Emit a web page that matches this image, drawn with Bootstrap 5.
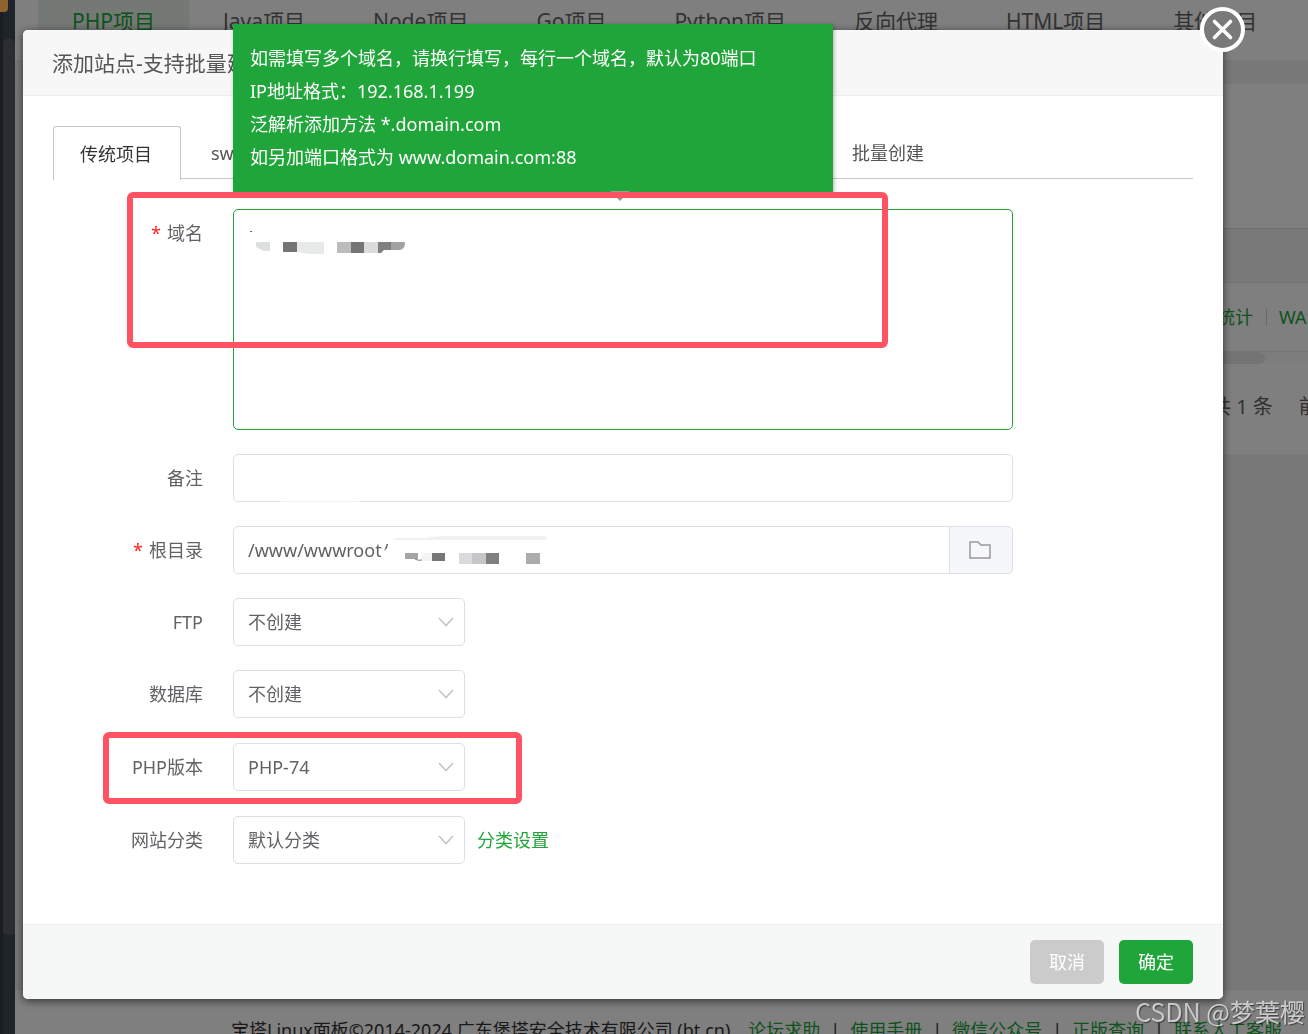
<!DOCTYPE html>
<html lang="zh-CN">
<head>
<meta charset="utf-8">
<meta name="viewport" content="width=device-width, initial-scale=1">
<title>添加站点</title>
<link href="https://cdn.jsdelivr.net/npm/bootstrap@5.3.0/dist/css/bootstrap.min.css" rel="stylesheet">
<style>
  :root { --bt-green: #20a53a; --bt-line: #dcdfe6; --bt-text: #606266; --bt-mark: #ff5262; }
  body { font-family: "Noto Sans", "Noto Sans CJK SC", sans-serif; font-size: 18px; line-height: 24px; color: var(--bt-text); background: #f1f1f1; overflow: hidden; }
  a { text-decoration: none; color: var(--bt-green); }

  /* page behind the dialog */
  .app-shell { height: 100vh; }
  .side-rail { width: 15px; z-index: 20; background: #1f232a; padding: 38px 0 0 3px; box-shadow: inset 3px 0 #1a1d21; }
  .side-thumb { height: 897px; background: #2a2e32; border-radius: 6px 6px 4px 4px; }
  .side-logo { width: 8px; height: 12px; top: 0; left: 0; background: #8f632c; border-radius: 0 0 4px 0; }
  .type-tabs { height: 60px; padding-left: 23px; font-size: 21px; background: #fff; }
  .type-tabs a { padding: 6px 34px 0; line-height: 30px; color: #666; }
  .type-tabs a.on { background: #ebf3ed; color: var(--bt-green); }
  .site-panel { margin: 24px 0 0 15px; background: #fff; }
  .panel-tools { height: 144px; }
  .panel-head { height: 55px; background: #f2f2f2; border-top: 1px solid #dcdcdc; border-bottom: 1px solid #e6e6e6; }
  .panel-row { height: 69px; border-bottom: 1px solid #ebebeb; }
  .row-tail { width: 91px; }
  .row-tail span { width: 1px; height: 18px; margin: 0 12px 0 13px; background: #d0d0d0; }
  .hscroll { height: 12px; background: #fafafa; }
  .hscroll div { width: 1235px; height: 12px; background: #e8e9e8; border-radius: 6px; }
  .panel-page { height: 90px; padding-bottom: 4px; font-size: 20px; }
  .page-tail { width: 97px; gap: 26px; }
  .app-foot { height: 44px; padding: 28px 0 0 216px; background: #fff; color: #333; gap: 10px; }
  .backdrop-dim { background: rgba(0,0,0,.5); z-index: 10; }

  /* dialog */
  .dialog-wrap { padding: 30px 85px 0 23px; z-index: 30; }
  .site-dialog { border-radius: 5px; background: #fff; box-shadow: 0 2px 8px rgba(0,0,0,.6); }
  .dialog-head { height: 66px; padding: 0 29px; background: #f7f7f7; border-bottom: 1px solid #eee; border-radius: 5px 5px 0 0; font-size: 21px; color: #555; }
  .dialog-close { top: -23px; right: -22px; width: 45px; height: 45px; }
  .dialog-body { padding: 30px 30px 60px; }
  .mode-tabs { height: 53px; border-bottom: 1px solid #c8c8cc; margin-bottom: 30px; }
  .mode-tabs button { border: 0; background: none; height: 53px; padding: 0 27px; color: #555; text-align: left; }
  .mode-tabs button.on { width: 128px; height: 54px; border: 1px solid #c4c6cc; border-bottom: 0; border-radius: 3px 3px 0 0; background: #fff; padding: 0 26px; color: #333; }
  .mode-tabs .mode-wide { width: 644px; padding-left: 30px; }

  .form-line { margin-bottom: 24px; }
  .form-line.pick { margin-bottom: 25px; }
  .line-label { width: 180px; padding-right: 30px; line-height: 48px; text-align: right; }
  .must::before { content: "*"; color: #f22; margin-right: 6px; }
  .line-field { width: 780px; }
  .site-dialog .form-control, .site-dialog .form-select { height: 48px; padding: 0 14px; font-size: 18px; line-height: 24px; color: var(--bt-text); border: 1px solid var(--bt-line); border-radius: 5px; background-color: #fff; }
  .site-dialog textarea.form-control { height: 221px; padding: 12px 14px; resize: none; border-color: var(--bt-green); }
  .site-dialog .input-group .form-control { border-radius: 5px 0 0 5px; }
  .site-dialog .input-group .folder-btn { width: 64px; padding: 0 2px 4px 0; border: 1px solid var(--bt-line); background: #f5f7fa; border-radius: 0 5px 5px 0; }
  .site-dialog .form-select { width: 232px; background-image: url("data:image/svg+xml,%3Csvg xmlns='http://www.w3.org/2000/svg' viewBox='0 0 16 10'%3E%3Cpath d='M1 1l7 7.500 7-7.500' fill='none' stroke='%23c0c4cc' stroke-width='1.600'/%3E%3C/svg%3E"); background-size: 16px 10px; background-position: right 10px center; }

  .field-tip { left: 180px; top: -185px; width: 600px; height: 170px; padding: 18px 17px; line-height: 33px; color: #fff; background: var(--bt-green); box-shadow: 1px 1px 4px rgba(0,0,0,.3); z-index: 2; }
  .tip-arrow { left: 558px; top: -18px; z-index: 4; }
  .red-frame { border: 6px solid var(--bt-mark); border-radius: 6px; z-index: 3; pointer-events: none; }
  .frame-domain { left: 74px; top: -17px; width: 761px; height: 156px; }
  .frame-php { left: 50px; top: -11px; width: 419px; height: 72px; }
  .mask-domain { left: 10px; top: 16px; }
  .mask-path { left: 149px; top: 4px; z-index: 6; }
  .mask-note { left: 48px; bottom: 0; width: 78px; height: 1px; background: #f4f4f6; }

  .dialog-foot { height: 75px; padding: 0 30px; gap: 15px; background: #f6f8f8; border-top: 1px solid #ecf0ef; border-radius: 0 0 5px 5px; }
  .dialog-foot .btn { width: 74px; height: 44px; padding: 0; border: 0; border-radius: 5px; font-size: 18px; color: #fff; }
  .dialog-foot .btn-drop { background: #cbcbcb; }
  .dialog-foot .btn-go { background: var(--bt-green); }
  .photo-credit { right: 3px; bottom: 8px; z-index: 40; font-size: 25px; line-height: 30px; color: rgba(255,255,255,.68); text-shadow: 1px 1px 1px rgba(0,0,0,.5); font-family: "Noto Sans CJK SC", sans-serif; }
</style>
</head>
<body>
<div class="app-shell d-flex">
  <aside class="side-rail position-relative flex-shrink-0"><div class="side-logo position-absolute"></div><div class="side-thumb"></div></aside>
  <div class="flex-grow-1 d-flex flex-column overflow-hidden">
    <nav class="type-tabs d-flex text-nowrap flex-shrink-0">
      <a class="on" href="#">PHP项目</a><a href="#">Java项目</a><a href="#">Node项目</a><a href="#">Go项目</a><a href="#">Python项目</a><a href="#">反向代理</a><a href="#">HTML项目</a><a href="#">其他项目</a>
    </nav>
    <section class="site-panel text-nowrap">
      <div class="panel-tools"></div>
      <div class="panel-head"></div>
      <div class="panel-row d-flex justify-content-end align-items-center">
        <div class="row-tail d-flex align-items-center"><a href="#">统计</a><span class="flex-shrink-0"></span><a href="#">WAF</a></div>
      </div>
      <div class="hscroll"><div></div></div>
      <div class="panel-page d-flex justify-content-end align-items-center">
        <div class="page-tail d-flex"><div>共 1 条</div><div>前</div></div>
      </div>
    </section>
    <footer class="app-foot d-flex text-nowrap mt-auto flex-shrink-0">
      <div class="me-2">宝塔Linux面板©2014-2024 广东堡塔安全技术有限公司 (bt.cn)</div>
      <a href="#">论坛求助</a><div>|</div><a href="#">使用手册</a><div>|</div><a href="#">微信公众号</a><div>|</div><a href="#">正版查询</a><div>|</div><a href="#">联系人工客服</a>
    </footer>
  </div>
</div>
<div class="backdrop-dim position-fixed top-0 start-0 w-100 h-100"></div>

<div class="dialog-wrap position-absolute top-0 start-0 w-100">
  <div class="site-dialog position-relative" role="dialog" aria-labelledby="dlgTitle">
    <div class="dialog-head d-flex align-items-center" id="dlgTitle">添加站点-支持批量建</div>
    <button type="button" class="dialog-close position-absolute border-0 bg-transparent p-0 d-flex" aria-label="关闭">
      <svg width="45" height="45" viewBox="0 0 45 45"><circle cx="22.500" cy="22.500" r="20.500" fill="#797979" stroke="#fff" stroke-width="4"/><path d="M14.500 14.500l16 16M30.500 14.500l-16 16" stroke="#fff" stroke-width="3.600" stroke-linecap="round"/></svg>
    </button>
    <div class="dialog-body">
      <div class="mode-tabs d-flex">
        <button type="button" class="on">传统项目</button><button type="button" class="mode-wide">sw</button><button type="button">批量创建</button>
      </div>
      <form>
        <div class="form-line d-flex position-relative">
          <label class="line-label must" for="fDomain">域名</label>
          <div class="line-field position-relative">
            <textarea class="form-control" id="fDomain"></textarea>
            <svg class="mask-domain position-absolute" width="170" height="34" viewBox="0 0 170 34">
              <rect x="7" y="6" width="2" height="1" fill="#666"/>
              <path d="M13 17h14v9h-6l-8-4z" fill="#dcdfe0"/>
              <rect x="40" y="17" width="14" height="10" fill="#757575"/><path d="M54 17h27v12H67l-13-2z" fill="#e8eaea"/>
              <rect x="94" y="17" width="14" height="11" fill="#bcbcbf"/><rect x="108" y="17" width="13" height="11" fill="#757575"/><rect x="121" y="17" width="14" height="11" fill="#dadcda"/>
              <path d="M135 17h14v8h-8l-3 3h-3z" fill="#808080"/><path d="M148 17h14q0 8-6 8h-8z" fill="#a2a2a2"/>
            </svg>
          </div>
          <div class="field-tip position-absolute" role="tooltip">如需填写多个域名，请换行填写，每行一个域名，默认为80端口<br>IP地址格式：192.168.1.199<br>泛解析添加方法 *.domain.com<br>如另加端口格式为 www.domain.com:88</div>
          <div class="red-frame frame-domain position-absolute"></div>
          <svg class="tip-arrow position-absolute" width="18" height="10" viewBox="0 0 18 10"><path d="M0 0h18v1H0z" fill="#8aa88a"/><path d="M6 7h6l-3 3z" fill="#999"/></svg>
        </div>
        <div class="form-line d-flex">
          <label class="line-label" for="fNote">备注</label>
          <div class="line-field position-relative"><input type="text" class="form-control" id="fNote"><div class="mask-note position-absolute"></div></div>
        </div>
        <div class="form-line d-flex">
          <label class="line-label must" for="fPath">根目录</label>
          <div class="line-field input-group position-relative">
            <input type="text" class="form-control" id="fPath" value="/www/wwwroot/">
            <svg class="mask-path position-absolute" width="172" height="38" viewBox="0 0 172 38">
              <path d="M12 10q1-3 6-2h26q12-2 20-2h98q4 0 4 3v1z" fill="#f1f1f2"/><path d="M5 19h4l-4 10h5v7H0V24z" fill="#fff"/>
              <rect x="24" y="23" width="13" height="6" fill="#a5a5a5"/><path d="M34 29q3 2 7 1" stroke="#777" fill="none"/><rect x="41" y="23" width="10" height="8" fill="#f4f4f2"/>
              <rect x="51" y="23" width="13" height="8" fill="#777"/><rect x="78" y="23" width="13" height="11" fill="#d9dbda"/><rect x="91" y="23" width="14" height="11" fill="#c5c5ca"/><rect x="105" y="23" width="13" height="11" fill="#808080"/><rect x="145" y="23" width="14" height="11" fill="#acacac"/>
            </svg>
            <button type="button" class="folder-btn" aria-label="选择目录"><svg width="24" height="20" viewBox="0 0 24 20"><path d="M2 2h8l3 3h9v13H2z" fill="none" stroke="#999" stroke-width="1.500"/></svg></button>
          </div>
        </div>
        <div class="form-line d-flex">
          <label class="line-label" for="fFtp">FTP</label>
          <select class="form-select" id="fFtp"><option>不创建</option></select>
        </div>
        <div class="form-line pick d-flex">
          <label class="line-label" for="fDb">数据库</label>
          <select class="form-select" id="fDb"><option>不创建</option></select>
        </div>
        <div class="form-line pick d-flex position-relative">
          <label class="line-label" for="fPhp">PHP版本</label>
          <select class="form-select" id="fPhp"><option>PHP-74</option></select>
          <div class="red-frame frame-php position-absolute"></div>
        </div>
        <div class="d-flex align-items-center">
          <label class="line-label" for="fCat">网站分类</label>
          <select class="form-select" id="fCat"><option>默认分类</option></select>
          <a href="#" class="ms-2 ps-1">分类设置</a>
        </div>
      </form>
    </div>
    <div class="dialog-foot d-flex justify-content-end align-items-center">
      <button type="button" class="btn btn-drop">取消</button>
      <button type="button" class="btn btn-go">确定</button>
    </div>
  </div>
</div>
<div class="photo-credit position-fixed">CSDN @梦葉樱</div>
<script src="https://cdn.jsdelivr.net/npm/bootstrap@5.3.0/dist/js/bootstrap.bundle.min.js"></script>
</body>
</html>
